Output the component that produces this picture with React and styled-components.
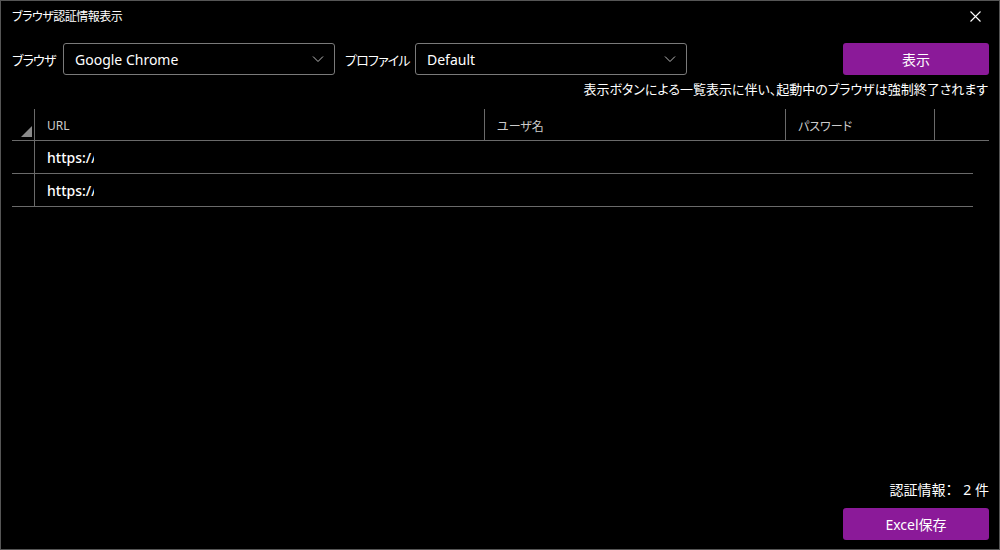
import React from 'react'
import styled, { createGlobalStyle } from 'styled-components'

const GlobalStyle = createGlobalStyle`
  html, body { margin: 0; padding: 0; background: #000; }
  body {
    font-family: "Noto Sans", "Noto Sans CJK JP", sans-serif;
    font-feature-settings: "palt";
    color: #fff;
  }
  * { box-sizing: border-box; }
`

const rows = ['https://', 'https://']

function Chevron() {
  return (
    <svg width="12" height="8" viewBox="0 0 12 8">
      <path d="M1 1.5 L6 6.5 L11 1.5" fill="none" stroke="#bbb" strokeWidth="1" />
    </svg>
  )
}

function App() {
  return (
    <Window>
      <GlobalStyle />
      <TitleBar>
        <Title>ブラウザ認証情報表示</Title>
        <CloseButton>
          <svg width="11" height="11" viewBox="0 0 11 11">
            <path d="M0.5 0.5 L10.5 10.5 M10.5 0.5 L0.5 10.5" stroke="#fff" strokeWidth="1.1" />
          </svg>
        </CloseButton>
      </TitleBar>
      <Toolbar>
        <Label w={51}>ブラウザ</Label>
        <Select>
          <span>Google Chrome</span>
          <Chevron />
        </Select>
        <Label w={70}>プロファイル</Label>
        <Select>
          <span>Default</span>
          <Chevron />
        </Select>
        <Spacer />
        <PrimaryButton>表示</PrimaryButton>
      </Toolbar>
      <Note>表示ボタンによる一覧表示に伴い、起動中のブラウザは強制終了されます</Note>
      <Grid>
        <HeaderRow>
          <Corner>
            <svg width="11" height="11" viewBox="0 0 11 11">
              <path d="M11 0 L11 11 L0 11 Z" fill="#8a8a8a" />
            </svg>
          </Corner>
          <HeadCell w={450}>URL</HeadCell>
          <HeadCell w={301}>ユーザ名</HeadCell>
          <HeadCell w={149}>パスワード</HeadCell>
          <HeadCell w={54} last />
        </HeaderRow>
        {rows.map((url, i) => (
          <Row key={i}>
            <RowHead />
            <Cell w={450}><Clip>{url}</Clip></Cell>
            <Cell w={301} />
            <Cell w={149} />
            <Cell w={38} />
          </Row>
        ))}
      </Grid>
      <Footer>
        <Count>認証情報：&nbsp;&nbsp;&nbsp;2 件</Count>
        <PrimaryButton>Excel保存</PrimaryButton>
      </Footer>
    </Window>
  )
}

export default App

const Window = styled.div`
  width: 1000px;
  height: 550px;
  border: 1px solid #555;
  background: #000;
  display: flex;
  flex-direction: column;
  overflow: hidden;
`
const TitleBar = styled.div`
  height: 32px;
  display: flex;
  align-items: center;
  justify-content: space-between;
  padding: 0 18px 0 11px;
`
const Title = styled.div`
  font-size: 12px;
  letter-spacing: -0.5px;
  color: #fff;
  margin-top: -2px;
`
const CloseButton = styled.div`
  display: flex;
  align-items: center;
  margin-top: -2px;
`
const Toolbar = styled.div`
  display: flex;
  align-items: center;
  padding: 10px 10px 0 11px;
  height: 42px;
`
const Label = styled.div`
  width: ${p => p.w}px;
  font-size: 13px;
  letter-spacing: -0.8px;
  white-space: nowrap;
`
const Select = styled.div`
  width: 272px;
  height: 32px;
  border: 1px solid #7a7a7a;
  border-radius: 3px;
  display: flex;
  align-items: center;
  justify-content: space-between;
  padding: 0 10px 0 11px;
  font-size: 14px;
  margin-right: 10px;
`
const Spacer = styled.div`
  flex: 1;
`
const PrimaryButton = styled.div`
  width: 146px;
  height: 32px;
  background: #8b1a99;
  border-radius: 3px;
  display: flex;
  align-items: center;
  justify-content: center;
  font-size: 14px;
  color: #fff;
`
const Note = styled.div`
  font-size: 13px;
  text-align: right;
  padding: 4px 11px 0 0;
  height: 24px;
  line-height: 20px;
`
const Grid = styled.div`
  flex: 1;
  margin: 10px 0 0 11px;
  display: flex;
  flex-direction: column;
`
const HeaderRow = styled.div`
  display: flex;
  width: 977px;
  height: 32px;
  border-bottom: 1px solid #6a6a6a;
`
const Corner = styled.div`
  width: 23px;
  border-right: 1px solid #6a6a6a;
  display: flex;
  align-items: flex-end;
  justify-content: flex-end;
  padding: 0 2px 3px 0;
`
const HeadCell = styled.div`
  width: ${p => p.w}px;
  border-right: ${p => (p.last ? 'none' : '1px solid #6a6a6a')};
  font-size: 12px;
  color: #ccc;
  padding: 8px 0 0 12px;
`
const Row = styled.div`
  display: flex;
  width: 961px;
  height: 33px;
  border-bottom: 1px solid #6a6a6a;
`
const RowHead = styled.div`
  width: 23px;
  border-right: 1px solid #6a6a6a;
`
const Cell = styled.div`
  width: ${p => p.w}px;
  font-size: 14px;
  display: flex;
  align-items: center;
  padding-left: 12px;
`
const Clip = styled.span`
  display: inline-block;
  width: 47px;
  overflow: hidden;
  white-space: nowrap;
  font-weight: 500;
`
const Footer = styled.div`
  display: flex;
  flex-direction: column;
  align-items: flex-end;
  padding: 0 10px 9px 0;
`
const Count = styled.div`
  font-size: 14px;
  margin-bottom: 9px;
`
